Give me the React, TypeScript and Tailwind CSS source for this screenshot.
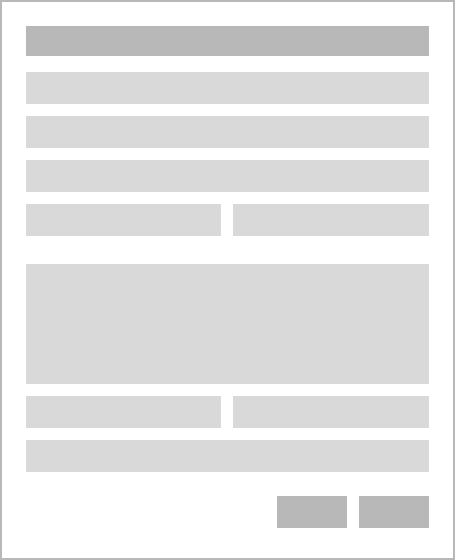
import React from "react";

export default function App() {
  return (
    <div className="w-[455px] h-[560px] border-2 border-[#b8b8b8] bg-white px-[24px] pt-[24px] flex flex-col">
      <div className="h-[30px] bg-[#b8b8b8]" />
      <div className="mt-[16px] flex flex-col gap-[12px]">
        <div className="h-[32px] bg-[#d9d9d9]" />
        <div className="h-[32px] bg-[#d9d9d9]" />
        <div className="h-[32px] bg-[#d9d9d9]" />
        <div className="grid grid-cols-[195px_196px] gap-[12px]">
          <div className="h-[32px] bg-[#d9d9d9]" />
          <div className="h-[32px] bg-[#d9d9d9]" />
        </div>
      </div>
      <div className="mt-[28px] flex flex-col gap-[12px]">
        <div className="h-[120px] bg-[#d9d9d9]" />
        <div className="grid grid-cols-[195px_196px] gap-[12px]">
          <div className="h-[32px] bg-[#d9d9d9]" />
          <div className="h-[32px] bg-[#d9d9d9]" />
        </div>
        <div className="h-[32px] bg-[#d9d9d9]" />
      </div>
      <div className="mt-[24px] flex justify-end gap-[12px]">
        <div className="w-[70px] h-[32px] bg-[#b8b8b8]" />
        <div className="w-[70px] h-[32px] bg-[#b8b8b8]" />
      </div>
    </div>
  );
}
